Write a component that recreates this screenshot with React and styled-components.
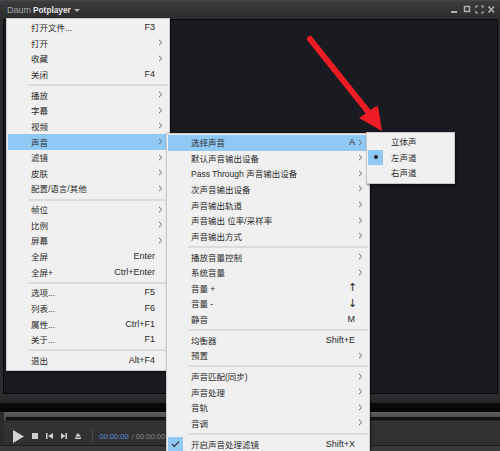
import React from 'react';
import styled, { createGlobalStyle } from 'styled-components';

const Global = createGlobalStyle`
  html, body { margin: 0; padding: 0; background: #2a2a2c; }
  body { font-family: "Liberation Sans", "Noto Sans CJK SC", sans-serif; overflow: hidden; }
`;

const Player = styled.div`
  position: relative;
  width: 500px;
  height: 451px;
  overflow: hidden;
  display: flex;
  flex-direction: column;
  background: #2b2b2d;
`;

const TitleBar = styled.div`
  height: 19px;
  flex: none;
  display: flex;
  align-items: center;
  justify-content: space-between;
  padding: 1px 5px 0 7px;
  box-sizing: border-box;
  background: linear-gradient(#4a4a4c 0, #3a3a3c 2px, #2c2c2e 100%);
`;

const Logo = styled.div`
  display: flex;
  align-items: center;
  gap: 2px;
  font-size: 9px;
  color: #a8a8a8;
  b { color: #e4e4e4; font-size: 8.3px; }
`;

const Caret = styled.span`
  width: 0;
  height: 0;
  margin-left: 1px;
  border-left: 3px solid transparent;
  border-right: 3px solid transparent;
  border-top: 3px solid #b5b5b5;
`;

const WindowButtons = styled.div`
  display: flex;
  align-items: center;
`;

const Video = styled.div`
  flex: none;
  height: 375px;
  margin: 0 2px 0 3px;
  background: #1a1b20;
  border: 1px solid #08080a;
  box-sizing: border-box;
`;

const Band = styled.div`
  flex: none;
  height: 18px;
  background: linear-gradient(#2e2e30 0, #262628 9px, #0a0a0c 9px, #060608 100%);
`;

const Controls = styled.div`
  flex: none;
  height: 33px;
  margin-left: 4px;
  background: linear-gradient(#606062, #444446 8px, #333335 9px, #303032 100%);
  display: flex;
  flex-direction: column;
  box-sizing: border-box;
`;

const Footer = styled.div`
  flex: 1;
  background: #3a3a3c;
  border-top: 1px solid #1c1c1e;
`;

const Seek = styled.div`
  height: 3px;
  margin: 5px 0 0 2px;
  background: #141416;
  border-bottom: 1px solid #222;
`;

const Buttons = styled.div`
  display: flex;
  align-items: center;
  gap: 8px;
  margin: 8px 0 0 9px;
`;

const TimeBox = styled.div`
  display: flex;
  gap: 3px;
`;

const Time = styled.span`
  font-size: 7.5px;
  color: ${p => p.$color};
  white-space: nowrap;
`;

const Divider = styled.span`
  width: 1px;
  height: 14px;
  margin: 0 -1.5px 0 3px;
  background: #48484a;
`;

const MenuBox = styled.div`
  position: absolute;
  left: ${p => p.$left}px;
  top: ${p => p.$top}px;
  width: ${p => p.$width}px;
  box-sizing: border-box;
  padding: 1px 1px 2px;
  background: #f0f0f0;
  border: 1px solid #c9c9c9;
  box-shadow: 1px 1px 2px rgba(0, 0, 0, 0.55);
`;

const Row = styled.div`
  position: relative;
  height: 15.65px;
  box-sizing: border-box;
  display: flex;
  align-items: center;
  padding: 0 5px 1.5px 23px;
  font-size: 8.5px;
  color: #2a2a2a;
  white-space: nowrap;
  background: ${p => (p.$active ? '#90c8f6' : 'transparent')};
`;

const Label = styled.span`
  flex: 1;
`;

const Key = styled.span`
  margin-right: ${p => p.$gap}px;
  font-size: ${p => (p.$big ? '11px' : '9px')};
  font-family: ${p => (p.$big ? '"DejaVu Sans", sans-serif' : 'inherit')};
`;

const Chevron = styled.svg`
  width: 5px;
  height: 7px;
  flex: none;
`;

const Sep = styled.div`
  height: 2px;
  margin: 1.5px 0 1.5px 20px;
  background: #dcdcdc;
`;

const Mark = styled.span`
  position: absolute;
  left: 0;
  top: 0;
  width: 15px;
  height: 15.65px;
  display: flex;
  align-items: center;
  justify-content: center;
  background: #90c8f6;
`;

const Dot = styled.span`
  width: 4px;
  height: 4px;
  border-radius: 50%;
  background: #222;
`;

const Arrow = styled.svg`
  position: absolute;
  left: 300px;
  top: 32px;
  width: 90px;
  height: 102px;
`;

const arrowRight = (
  <Chevron viewBox="0 0 5 7">
    <path d="M1 .8 L3.8 3.5 L1 6.2" fill="none" stroke="#666" strokeWidth="1" />
  </Chevron>
);

const mainMenu = [
  [['打开文件...', 'F3'], ['打开', '>'], ['收藏', '>'], ['关闭', 'F4']],
  [['播放', '>'], ['字幕', '>'], ['视频', '>'], ['声音', '>', 'active'], ['滤镜', '>'], ['皮肤', '>'], ['配置/语言/其他', '>']],
  [['帧位', '>'], ['比例', '>'], ['屏幕', '>'], ['全屏', 'Enter'], ['全屏+', 'Ctrl+Enter']],
  [['选项...', 'F5'], ['列表...', 'F6'], ['属性...', 'Ctrl+F1'], ['关于...', 'F1']],
  [['退出', 'Alt+F4']],
];

const soundMenu = [
  [['选择声音', 'A>', 'active'], ['默认声音输出设备', '>'], ['Pass Through 声音输出设备', '>'], ['次声音输出设备', '>'], ['声音输出轨道', '>'], ['声音输出 位率/采样率', '>'], ['声音输出方式', '>']],
  [['播放音量控制', '>'], ['系统音量', '>'], ['音量 +', '↑'], ['音量 -', '↓'], ['静音', 'M']],
  [['均衡器', 'Shift+E'], ['预置', '>']],
  [['声音匹配(同步)', '>'], ['声音处理', '>'], ['音轨', '>'], ['音调', '>']],
  [['开启声音处理滤镜', 'Shift+X', 'check']],
];

function MenuRow({ label, right, flag }) {
  const hasArrow = right.endsWith('>');
  const key = hasArrow ? right.slice(0, -1) : right;
  const big = key === '↑' || key === '↓';
  return (
    <Row $active={flag === 'active'}>
      {flag === 'check' && (
        <Mark>
          <svg width="9" height="8" viewBox="0 0 9 8">
            <path d="M1 4 L3.4 6.4 L8 1.4" fill="none" stroke="#334" strokeWidth="1.3" />
          </svg>
        </Mark>
      )}
      <Label>{label}</Label>
      {key && <Key $big={big} $gap={hasArrow ? 3 : big ? 5.7 : 8}>{key}</Key>}
      {hasArrow && arrowRight}
    </Row>
  );
}

function Menu({ groups, left, top, width }) {
  return (
    <MenuBox $left={left} $top={top} $width={width}>
      {groups.map((group, i) => (
        <React.Fragment key={i}>
          {i > 0 && <Sep />}
          {group.map(([label, right, flag]) => (
            <MenuRow key={label} label={label} right={right} flag={flag} />
          ))}
        </React.Fragment>
      ))}
    </MenuBox>
  );
}

export default function App() {
  return (
    <Player>
      <Global />
      <TitleBar>
        <Logo>
          <span>Daum</span>
          <b>Potplayer</b>
          <Caret />
        </Logo>
        <WindowButtons>
          <svg width="44" height="10" viewBox="0 0 44 10">
            <g fill="none" stroke="#b0b0b0">
              <path d="M0 7 H6" strokeWidth="2" />
              <rect x="13.5" y="1.5" width="5" height="5" strokeWidth="1.5" />
              <path d="M25 3 V1 H27 M30 1 H32 V3 M32 6 V8 H30 M27 8 H25 V6" strokeWidth="1.2" />
              <path d="M37.5 1.5 L43 7.5 M43 1.5 L37.5 7.5" strokeWidth="1.6" />
            </g>
          </svg>
        </WindowButtons>
      </TitleBar>
      <Video />
      <Band />
      <Controls>
        <Seek />
        <Buttons>
          <svg width="11" height="13" viewBox="0 0 11 13">
            <path d="M0 0 L11 6.5 L0 13 Z" fill="#d4d4d4" />
          </svg>
          <svg width="6" height="6" viewBox="0 0 6 6">
            <rect width="6" height="6" fill="#d0d0d0" />
          </svg>
          <svg width="7" height="6" viewBox="0 0 7 6">
            <path d="M0 0 H1.5 V6 H0 Z M7 0 V6 L2 3 Z" fill="#d0d0d0" />
          </svg>
          <svg width="6" height="6" viewBox="0 0 6 6">
            <path d="M0 0 L4.5 3 L0 6 Z M4.5 0 H6 V6 H4.5 Z" fill="#d0d0d0" />
          </svg>
          <svg width="6" height="6" viewBox="0 0 6 6">
            <path d="M3 0 L6 3.4 H0 Z M0 4.5 H6 V6 H0 Z" fill="#d0d0d0" />
          </svg>
          <Divider />
          <TimeBox>
            <Time $color="#5f8fd0">00:00:00</Time>
            <Time $color="#8a8a8a">/ 00:00:00</Time>
          </TimeBox>
        </Buttons>
      </Controls>
      <Footer />
      <Menu groups={mainMenu} left={6} top={18} width={164} />
      <Menu groups={soundMenu} left={166} top={133} width={204} />
      <MenuBox $left={366} $top={132} $width={89}>
        <Row>立体声</Row>
        <Row>
          <Mark><Dot /></Mark>
          左声道
        </Row>
        <Row>右声道</Row>
      </MenuBox>
      <Arrow viewBox="0 0 90 102">
        <path d="M10 7 L70 82" stroke="#ee1c25" strokeWidth="6" strokeLinecap="round" fill="none" />
        <path d="M82 99 L59 86 L75 75 L78 74 Z" fill="#ee1c25" />
      </Arrow>
    </Player>
  );
}
